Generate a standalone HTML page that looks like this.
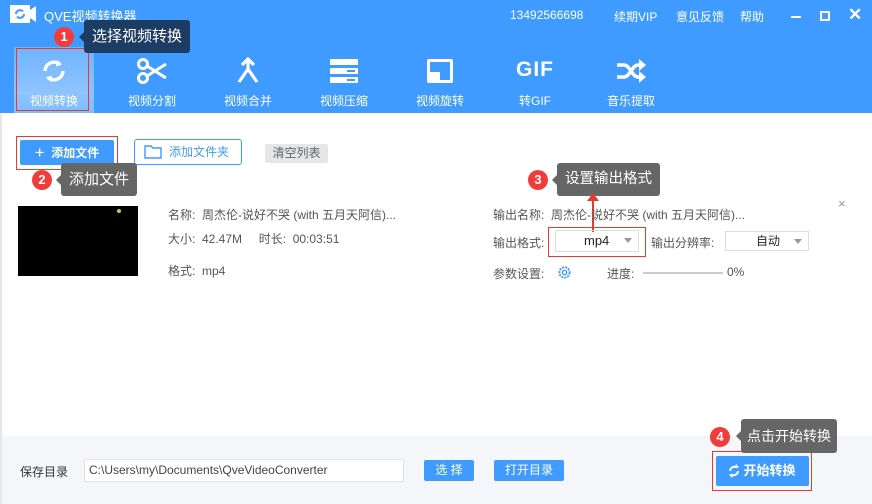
<!DOCTYPE html>
<html><head><meta charset="utf-8"><style>
*{margin:0;padding:0;box-sizing:border-box}
body{width:872px;height:504px;overflow:hidden;background:#fff;font-family:"Liberation Sans","Noto Sans CJK SC",sans-serif;position:relative;color:#333;font-size:12px}
.a{position:absolute}
.hdr{left:0;top:0;width:872px;height:113px;background:#3f9bff}
.t{color:#fff;font-size:12px}
.tb{position:absolute;top:47px;width:80px;height:66px;text-align:center;color:#fff;font-size:12px}
.tb svg{display:block;margin:9px auto 0}
.tb span{position:absolute;left:0;right:0;top:45px}
.badge{position:absolute;width:20px;height:20px;border-radius:10px;background:#f23c3c;color:#fff;font-size:13px;text-align:center;line-height:20px;font-weight:bold}
.tip{position:absolute;color:#fff;font-size:15px;padding:0 8px;border-radius:3px;line-height:33px}
.tip:before{content:"";position:absolute;left:-5px;top:12px;border:5px solid transparent;border-left:0;border-right-color:inherit}
.lbl{position:absolute;font-size:12px;color:#555}
.btn{position:absolute;background:#3f9bff;color:#fff;border-radius:2px;text-align:center;font-size:13px}
.red{position:absolute;border:1px solid #e53935}
</style></head><body>
<div class="a hdr"></div>
<!-- logo -->
<svg class="a" style="left:10px;top:5px" width="26" height="18" viewBox="0 0 26 18"><rect x="0" y="0" width="20" height="18" fill="#fff"/><path d="M20 5l6-4v16l-6-4z" fill="#fff"/><path d="M6 9a4 4 0 0 1 7-2.5M14 9a4 4 0 0 1-7 2.5" stroke="#3f9bff" stroke-width="2" fill="none"/></svg>
<div class="a t" style="left:44px;top:6px;font-size:13px">QVE视频转换器</div>
<div class="a t" style="left:510px;top:8px">13492566698</div>
<div class="a t" style="left:614px;top:8px">续期VIP</div>
<div class="a t" style="left:676px;top:8px">意见反馈</div>
<div class="a t" style="left:740px;top:8px">帮助</div>
<div class="a" style="left:791px;top:16px;width:10px;height:2px;background:#fff"></div>
<div class="a" style="left:820px;top:11px;width:10px;height:10px;border:2px solid #fff"></div>
<div class="a t" style="left:848px;top:5px;font-size:17px;font-weight:bold">✕</div>

<div class="tb" style="left:14px;background:linear-gradient(#6fb3ff,#8ec4ff 70%,#7fbcff)"><svg width="30" height="30" viewBox="0 0 30 30"><path d="M6 15a9 9 0 0 1 15-6.5M24 15a9 9 0 0 1-15 6.5" stroke="#fff" stroke-width="3.5" fill="none"/><path d="M18 4l5 4.5-6 2z M12 26l-5-4.5 6-2z" fill="#fff"/></svg><span>视频转换</span></div>
<div class="tb" style="left:112px"><svg width="32" height="30" viewBox="0 0 32 30"><circle cx="7" cy="8" r="4.5" stroke="#fff" stroke-width="3" fill="none"/><circle cx="7" cy="22" r="4.5" stroke="#fff" stroke-width="3" fill="none"/><path d="M11 10l19 12M11 20l19-12" stroke="#fff" stroke-width="3"/></svg><span>视频分割</span></div>
<div class="tb" style="left:208px"><svg width="30" height="30" viewBox="0 0 30 30"><path d="M15 3v10l-9 13M15 13l9 13M9 9l6-6 6 6" stroke="#fff" stroke-width="3.2" fill="none"/></svg><span>视频合并</span></div>
<div class="tb" style="left:304px"><svg width="30" height="30" viewBox="0 0 30 30"><rect x="1" y="3" width="28" height="6" fill="#fff"/><rect x="1" y="12" width="28" height="6" fill="#fff"/><rect x="1" y="21" width="28" height="6" fill="#fff"/><rect x="18" y="14" width="8" height="2" fill="#3f9bff"/><rect x="18" y="23" width="8" height="2" fill="#3f9bff"/></svg><span>视频压缩</span></div>
<div class="tb" style="left:400px"><svg width="30" height="30" viewBox="0 0 30 30"><rect x="2" y="3" width="26" height="24" rx="2" fill="#fff"/><rect x="5" y="6" width="20" height="10" fill="#3f9bff"/><rect x="15" y="16" width="10" height="8" fill="#3f9bff"/></svg><span>视频旋转</span></div>
<div class="tb" style="left:495px"><div style="margin-top:11px;height:26px;font:bold 21px 'Liberation Sans',sans-serif;letter-spacing:1px">GIF</div><span>转GIF</span></div>
<div class="tb" style="left:591px"><svg width="32" height="30" viewBox="0 0 32 30"><path d="M2 9h7c6 0 8 12 14 12h3M2 21h7c6 0 8-12 14-12h3" stroke="#fff" stroke-width="3.5" fill="none"/><path d="M24 3l7 6-7 6zM24 15l7 6-7 6z" fill="#fff"/></svg><span>音乐提取</span></div>
<div class="red" style="left:16px;top:48px;width:73px;height:63px"></div>

<div class="badge" style="left:54px;top:27px">1</div>
<div class="tip" style="left:84px;top:20px;background:#1d3c63;border-color:#1d3c63">选择视频转换</div>

<!-- left border line -->
<div class="a" style="left:0;top:113px;width:2px;height:391px;background:#e6e6e6"></div>

<div class="btn" style="left:20px;top:140px;width:94px;height:25px;line-height:25px;font-weight:bold;font-size:12px"><span style="font-size:17px;font-weight:normal;vertical-align:-1px">+</span>&nbsp; 添加文件</div>
<div class="red" style="left:16px;top:136px;width:102px;height:34px"></div>
<div class="a" style="left:134px;top:139px;width:108px;height:26px;border:1px solid #3f9bff;border-radius:3px;color:#3f9bff;font-size:12px;line-height:24px;padding-left:34px">添加文件夹</div>
<svg class="a" style="left:144px;top:145px" width="18" height="14" viewBox="0 0 18 14"><path d="M1 1h6l2 2h8v10H1z" stroke="#3f9bff" stroke-width="1.4" fill="none"/></svg>
<div class="a" style="left:265px;top:144px;width:63px;height:19px;background:#e5e6e8;border-radius:2px;color:#666;font-size:12px;line-height:19px;text-align:center">清空列表</div>

<div class="badge" style="left:32px;top:170px">2</div>
<div class="tip" style="left:61px;top:163px;background:#666;border-color:#666">添加文件</div>

<div class="a" style="left:18px;top:206px;width:120px;height:70px;background:#000"></div>
<div class="a" style="left:117px;top:209px;width:4px;height:4px;border-radius:2px;background:#cc3"></div>
<div class="lbl" style="left:168px;top:206px">名称:&nbsp; 周杰伦-说好不哭 (with 五月天阿信)...</div>
<div class="lbl" style="left:168px;top:230px">大小:&nbsp; 42.47M&nbsp;&nbsp;&nbsp;&nbsp; 时长:&nbsp; 00:03:51</div>
<div class="lbl" style="left:168px;top:262px">格式:&nbsp; mp4</div>

<div class="badge" style="left:528px;top:170px">3</div>
<div class="tip" style="left:557px;top:163px;background:#666;border-color:#666;font-size:14.5px">设置输出格式</div>
<div class="a" style="left:592px;top:198px;width:2px;height:34px;background:#e53935"></div>
<svg class="a" style="left:587px;top:193px" width="12" height="8"><path d="M6 0l6 8H0z" fill="#e53935"/></svg>

<div class="lbl" style="left:493px;top:206px">输出名称:&nbsp; 周杰伦-说好不哭 (with 五月天阿信)...</div>
<div class="a" style="left:838px;top:196px;color:#999;font-size:13px">×</div>
<div class="lbl" style="left:493px;top:234px">输出格式:</div>
<div class="a" style="left:555px;top:230px;width:84px;height:22px;border:1px solid #ddd;font-size:13px;line-height:20px;padding-left:28px;color:#222">mp4</div>
<svg class="a" style="left:624px;top:238px" width="8" height="5"><path d="M0 0h8L4 5z" fill="#999"/></svg>
<div class="red" style="left:548px;top:227px;width:98px;height:30px"></div>
<div class="lbl" style="left:651px;top:234px">输出分辨率:</div>
<div class="a" style="left:725px;top:231px;width:84px;height:20px;border:1px solid #ddd;font-size:12px;line-height:18px;padding-left:30px;color:#222">自动</div>
<svg class="a" style="left:794px;top:239px" width="8" height="5"><path d="M0 0h8L4 5z" fill="#999"/></svg>
<div class="lbl" style="left:493px;top:265px">参数设置:</div>
<svg class="a" style="left:557px;top:265px" width="15" height="15" viewBox="0 0 16 16"><circle cx="8" cy="8" r="5.5" stroke="#3f9bff" stroke-width="2" fill="none" stroke-dasharray="2.2 1.1"/><circle cx="8" cy="8" r="2.3" stroke="#3f9bff" stroke-width="1.5" fill="none"/></svg>
<div class="lbl" style="left:607px;top:265px">进度:</div>
<div class="a" style="left:643px;top:272px;width:80px;height:2px;background:#ccc"></div>
<div class="lbl" style="left:727px;top:265px">0%</div>

<!-- bottom -->
<div class="a" style="left:2px;top:436px;width:870px;height:68px;background:#f4f6f9"></div>
<div class="lbl" style="left:20px;top:463px;color:#333">保存目录</div>
<div class="a" style="left:84px;top:459px;width:320px;height:23px;background:#fff;border:1px solid #e3e3e3;font-size:12px;line-height:21px;padding-left:4px;color:#444">C:\Users\my\Documents\QveVideoConverter</div>
<div class="btn" style="left:424px;top:460px;width:50px;height:21px;line-height:21px;font-size:12px">选 择</div>
<div class="btn" style="left:494px;top:460px;width:70px;height:21px;line-height:21px;font-size:12px">打开目录</div>
<div class="btn" style="left:716px;top:456px;width:93px;height:30px;line-height:30px;font-weight:bold;padding-left:14px">开始转换</div>
<svg class="a" style="left:727px;top:463px" width="14" height="16" viewBox="0 0 14 16"><path d="M3 8a4.5 4.5 0 0 1 7-3.5M11 8a4.5 4.5 0 0 1-7 3.5" stroke="#fff" stroke-width="2" fill="none"/><path d="M9 1l3 3.5-4 0.5zM5 15l-3-3.5 4-0.5z" fill="#fff"/></svg>
<div class="red" style="left:712px;top:451px;width:100px;height:40px"></div>
<div class="badge" style="left:710px;top:427px">4</div>
<div class="tip" style="left:741px;top:419px;background:#666;border-color:#666;font-size:14px;padding:0 6px;line-height:34px">点击开始转换</div>
</body></html>
